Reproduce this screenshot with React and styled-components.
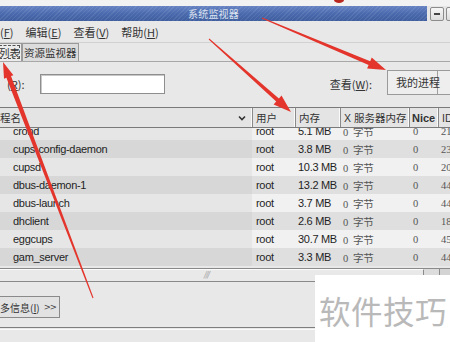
import React from "react";
import styled, { createGlobalStyle } from "styled-components";

const GlobalStyle = createGlobalStyle`
  html, body {
    margin: 0;
    padding: 0;
    background: #e8e8e8;
    overflow: hidden;
  }
  * { box-sizing: border-box; }
`;

const Screen = styled.div`
  position: relative;
  width: 450px;
  height: 342px;
  overflow: hidden;
  background: #e8e8e8;
  font-family: "Noto Sans CJK SC", "Liberation Sans", sans-serif;
  font-size: 11px;
  color: #333;
`;

const TopStrip = styled.div`
  height: 6px;
  background: #f2f2f2;
`;

const TitleBar = styled.div`
  display: flex;
  height: 15px;
  align-items: stretch;
`;

const TitleStripe = styled.div`
  flex: 1;
  display: flex;
  align-items: center;
  justify-content: center;
  background: repeating-linear-gradient(
      135deg,
      rgba(255, 255, 255, 0.08) 0 1px,
      rgba(0, 0, 0, 0) 1px 3px
    ),
    linear-gradient(180deg, #6683c2 0%, #4b6aae 50%, #3f5e9f 100%);
  color: #dbe2f0;
  font-size: 10px;
  letter-spacing: 0.2px;
`;

const WinButtons = styled.div`
  display: flex;
  gap: 2px;
  padding: 0 0 0 3px;
  background: #e6e6e6;
  width: 23px;
  align-items: center;
`;

const WinButton = styled.div`
  width: 14px;
  height: 14px;
  flex: none;
  border: 1px solid #8c8c8c;
  border-radius: 2px;
  background: linear-gradient(#f6f6f6, #dcdcdc);
  display: flex;
  align-items: center;
  justify-content: center;
  &::after {
    content: "";
    width: 6px;
    height: 2px;
    background: #444;
    display: ${(p) => (p.$glyph ? "block" : "none")};
  }
`;

const MenuBar = styled.div`
  display: flex;
  height: 22px;
  align-items: center;
  border-bottom: 1px solid #d2d2d2;
`;

const MenuItem = styled.div`
  padding: 0 6px;
  &:first-child {
    padding-left: 0;
  }
  & u {
    text-underline-offset: 1px;
  }
`;

const TabRow = styled.div`
  display: flex;
  height: 19px;
  align-items: stretch;
  border-bottom: 1px solid #a8a8a8;
  font-size: 10.5px;
`;

const Tab = styled.div`
  display: flex;
  align-items: center;
  padding: 0 1px;
  border: 1px solid #9a9a9a;
  border-bottom: none;
  background: ${(p) => (p.$active ? "#ececec" : "#dcdcdc")};
  outline: ${(p) => (p.$active ? "1px dashed #555" : "none")};
  outline-offset: -3px;
  margin-left: ${(p) => (p.$active ? "-3px" : "0")};
`;

const FilterRow = styled.div`
  display: flex;
  align-items: center;
  height: 45px;
  padding-bottom: 1px;
`;

const FieldLabel = styled.span`
  margin-left: ${(p) => p.$left || 0}px;
  margin-right: ${(p) => p.$right || 0}px;
  & u {
    text-underline-offset: 1px;
  }
`;

const TextInput = styled.div`
  width: 125px;
  height: 20px;
  background: #fff;
  border: 1px solid #8e8e8e;
  box-shadow: inset 1px 1px 0 #c8c8c8;
`;

const Spacer = styled.div`
  flex: 1;
`;

const Combo = styled.div`
  display: flex;
  height: 25px;
  width: 80px;
  margin-right: -17px;
  margin-top: -4px;
  border: 1px solid #9a9a9a;
  background: #eeeeee;
`;

const ComboText = styled.div`
  width: 50px;
  display: flex;
  align-items: center;
  padding-left: 8px;
  border-right: 1px solid #a0a0a0;
  white-space: nowrap;
`;

const Tree = styled.div`
  border-top: 1px solid #7a7a7a;
`;

const cols = "252px 43px 45px 69px 29px 60px";

const HeaderRow = styled.div`
  display: grid;
  grid-template-columns: ${cols};
  height: 20px;
  border-bottom: 1px solid #7a7a7a;
  background: #e4e4e4;
`;

const HeaderCell = styled.div`
  display: flex;
  align-items: center;
  justify-content: space-between;
  padding: 0 2px 0 ${(p) => p.$pad ?? 3}px;
  border-left: ${(p) => (p.$first ? "none" : "1px solid #8a8a8a")};
  border-right: 1px solid #fafafa;
  white-space: nowrap;
  overflow: hidden;
  font-family: ${(p) =>
    p.$latin
      ? `"Liberation Sans", "Noto Sans CJK SC", sans-serif`
      : `"Noto Sans CJK SC", sans-serif`};
  font-size: ${(p) => (p.$bold ? "11px" : "10.5px")};
  font-weight: ${(p) => (p.$bold ? 700 : 400)};
  color: #333;
`;

const Chevron = styled.svg`
  width: 8px;
  height: 6px;
  margin-right: 3px;
`;

const RowsViewport = styled.div`
  height: 140px;
  overflow: hidden;
`;

const RowsList = styled.div`
  margin-top: -6px;
`;

const Row = styled.div`
  display: grid;
  grid-template-columns: ${cols};
  height: 18px;
  align-items: stretch;
  background: ${(p) => (p.$odd ? "#dfdfdf" : "#f1f1f1")};
  color: #1e1e1e;
`;

const Cell = styled.div`
  display: flex;
  align-items: center;
  padding-left: ${(p) => p.$pad ?? 3}px;
  white-space: nowrap;
  overflow: hidden;
  font-family: ${(p) =>
    p.$serif
      ? `"Liberation Serif", "Noto Sans CJK SC", serif`
      : `"Liberation Sans", "Noto Sans CJK SC", sans-serif`};
  font-size: ${(p) => (p.$serif ? "10.5px" : "11px")};
  color: ${(p) => (p.$serif ? "#555" : "#1e1e1e")};
  letter-spacing: ${(p) => (p.$serif ? "0" : "-0.3px")};
  word-spacing: ${(p) => (p.$serif ? "2px" : "0")};
`;

const SortCell = styled(Cell)`
  background: ${(p) => (p.$odd ? "#d7d7d7" : "#e6e6e6")};
`;

const HScroll = styled.div`
  display: flex;
  height: 14px;
  border-top: 1px solid #8a8a8a;
  border-bottom: 1px solid #8a8a8a;
  background: #d4d4d4;
`;

const Thumb = styled.div`
  flex: none;
  width: 424px;
  border-top: 1px solid #fbfbfb;
  border-right: 1px solid #8a8a8a;
  background: #e9e9e9;
  display: flex;
  align-items: center;
  justify-content: center;
  padding-right: 10px;
  color: #a8a8a8;
  font-size: 8px;
  letter-spacing: -1px;
  font-family: "DejaVu Sans", sans-serif;
  font-style: italic;
`;

const StepButton = styled.div`
  flex: none;
  width: 16px;
  background: #dcdcdc;
  border-right: 1px solid #8a8a8a;
`;

const BottomPanel = styled.div`
  display: flex;
  flex-direction: column;
  padding-top: 14px;
`;

const ButtonRow = styled.div`
  display: flex;
  height: 22px;
`;

const PushButton = styled.div`
  display: flex;
  align-items: center;
  gap: 4px;
  padding: 0 3px 0 0;
  border: 1px solid #8a8a8a;
  border-left: none;
  background: #e2e2e2;
  color: #333;
  font-size: 10px;
  & u {
    text-underline-offset: 1px;
  }
`;

const Arrows = styled.span`
  font-family: "DejaVu Sans", sans-serif;
  font-size: 8.5px;
  letter-spacing: -1px;
  color: #444;
`;

const PanelRule = styled.div`
  margin-top: 9px;
  height: 3px;
  border-top: 1px solid #7e7e7e;
  border-bottom: 1px solid #fafafa;
`;

const Overlay = styled.svg`
  position: absolute;
  left: 0;
  top: 0;
  width: 450px;
  height: 342px;
  pointer-events: none;
`;

const Watermark = styled.div`
  position: absolute;
  left: 315px;
  top: 275px;
  width: 135px;
  height: 67px;
  background: #ffffff;
  display: flex;
  align-items: center;
  padding-left: 4px;
  padding-top: 2px;
  color: #b9b9b9;
  font-family: "Noto Sans CJK SC", sans-serif;
  font-size: 31.5px;
  letter-spacing: 0.5px;
  white-space: nowrap;
`;

const processes = [
  ["crond", "5.1 MB", "2151"],
  ["cups-config-daemon", "3.8 MB", "2387"],
  ["cupsd", "10.3 MB", "2032"],
  ["dbus-daemon-1", "13.2 MB", "4401"],
  ["dbus-launch", "3.7 MB", "4400"],
  ["dhclient", "2.6 MB", "1842"],
  ["eggcups", "30.7 MB", "4517"],
  ["gam_server", "3.3 MB", "4498"],
];

function arrowPoints(x1, y1, x2, y2, w0, w1, headW, headL) {
  const dx = x2 - x1;
  const dy = y2 - y1;
  const len = Math.hypot(dx, dy);
  const ux = dx / len;
  const uy = dy / len;
  const nx = -uy;
  const ny = ux;
  const bx = x2 - ux * headL;
  const by = y2 - uy * headL;
  const pts = [
    [x1 + (nx * w0) / 2, y1 + (ny * w0) / 2],
    [bx + (nx * w1) / 2, by + (ny * w1) / 2],
    [bx + (nx * headW) / 2, by + (ny * headW) / 2],
    [x2, y2],
    [bx - (nx * headW) / 2, by - (ny * headW) / 2],
    [bx - (nx * w1) / 2, by - (ny * w1) / 2],
    [x1 - (nx * w0) / 2, y1 - (ny * w0) / 2],
  ];
  return pts.map((p) => p.map((v) => v.toFixed(1)).join(",")).join(" ");
}

const redArrows = [
  [93, 298, 3, 62, 1, 5, 10, 16],
  [262, 18, 386, 70, 1, 4, 12, 18],
  [209, 39, 291, 112, 1, 4, 12, 18],
];

export default function App() {
  return (
    <Screen>
      <GlobalStyle />
      <TopStrip />
      <TitleBar>
        <TitleStripe>系统监视器</TitleStripe>
        <WinButtons>
          <WinButton $glyph />
          <WinButton />
        </WinButtons>
      </TitleBar>

      <MenuBar>
        <MenuItem>
          (<u>F</u>)
        </MenuItem>
        <MenuItem>
          编辑(<u>E</u>)
        </MenuItem>
        <MenuItem>
          查看(<u>V</u>)
        </MenuItem>
        <MenuItem>
          帮助(<u>H</u>)
        </MenuItem>
      </MenuBar>

      <TabRow>
        <Tab $active>列表</Tab>
        <Tab>资源监视器</Tab>
      </TabRow>

      <FilterRow>
        <FieldLabel $left={7} $right={15}>
          (<u>R</u>):
        </FieldLabel>
        <TextInput />
        <Spacer />
        <FieldLabel $right={15}>
          查看(<u>W</u>):
        </FieldLabel>
        <Combo>
          <ComboText>我的进程</ComboText>
        </Combo>
      </FilterRow>

      <Tree>
        <HeaderRow>
          <HeaderCell $first $pad={0}>
            <span>程名</span>
            <Chevron viewBox="0 0 8 6">
              <path d="M1 1.5 L4 4.5 L7 1.5" fill="none" stroke="#333" strokeWidth="1.6" />
            </Chevron>
          </HeaderCell>
          <HeaderCell>用户</HeaderCell>
          <HeaderCell>内存</HeaderCell>
          <HeaderCell $latin>X 服务器内存</HeaderCell>
          <HeaderCell $latin $bold $pad={2}>
            Nice
          </HeaderCell>
          <HeaderCell $latin>ID</HeaderCell>
        </HeaderRow>
        <RowsViewport>
          <RowsList>
            {processes.map(([name, mem, pid], i) => (
              <Row key={name} $odd={i % 2 === 1}>
                <SortCell $odd={i % 2 === 1} $pad={13}>
                  {name}
                </SortCell>
                <Cell $pad={4}>root</Cell>
                <Cell>{mem}</Cell>
                <Cell $serif>0 字节</Cell>
                <Cell $serif $pad={4}>
                  0
                </Cell>
                <Cell $serif $pad={3}>
                  {pid}
                </Cell>
              </Row>
            ))}
          </RowsList>
        </RowsViewport>
        <HScroll>
          <Thumb>///</Thumb>
          <StepButton />
        </HScroll>
      </Tree>

      <BottomPanel>
        <ButtonRow>
          <PushButton>
            <span>
              多信息(<u>I</u>)
            </span>
            <Arrows>&gt;&gt;</Arrows>
          </PushButton>
        </ButtonRow>
        <PanelRule />
      </BottomPanel>

      <Overlay viewBox="0 0 450 342">
        {redArrows.map((a, i) => (
          <polygon key={i} points={arrowPoints(...a)} fill="#e4352c" />
        ))}
        <ellipse cx="339" cy="0" rx="5" ry="3" fill="#b8281f" />
      </Overlay>

      <Watermark>软件技巧</Watermark>
    </Screen>
  );
}
